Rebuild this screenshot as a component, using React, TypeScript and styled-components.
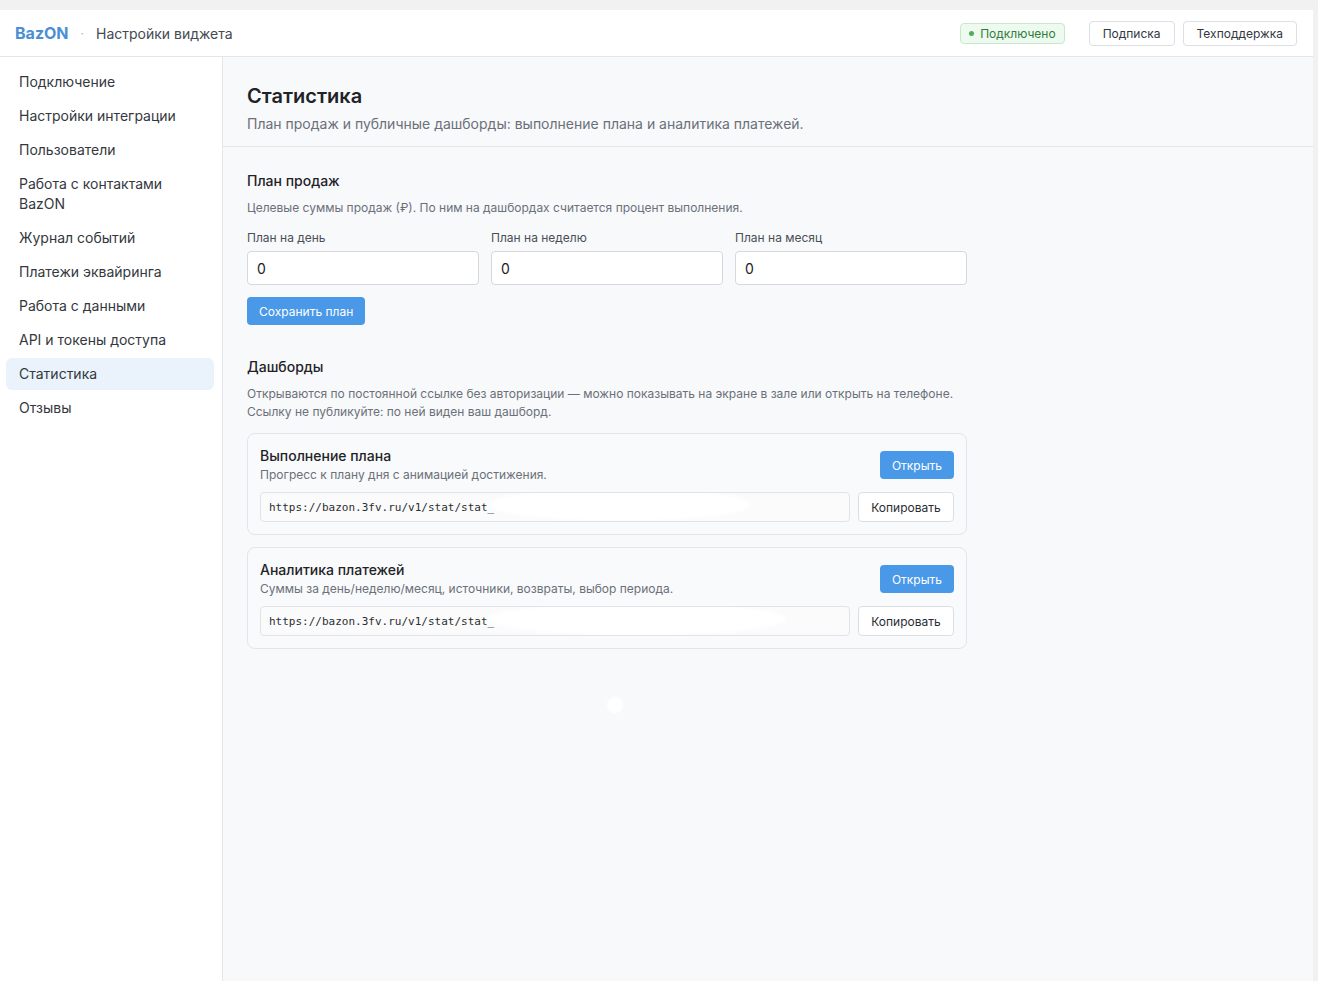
import styled, { createGlobalStyle } from "styled-components";

const GlobalStyle = createGlobalStyle`
  html, body {
    margin: 0;
    padding: 0;
    background: #f1f1f1;
    font-family: Inter, "Noto Sans", sans-serif;
    color: #2b2f36;
  }
  * { box-sizing: border-box; }
`

const Frame = styled.div`
  margin: 10px 5px 0 0;
  height: 971px;
  display: flex;
  flex-direction: column;
  background: #f8f9fb;
  overflow: hidden;
`

const TopBar = styled.header`
  height: 47px;
  flex-shrink: 0;
  background: #fff;
  border-bottom: 1px solid #e4e6ea;
  display: flex;
  align-items: center;
  padding: 0 16px 0 15px;
`

const Brand = styled.span`
  font-size: 16px;
  font-weight: 700;
  color: #4a8fd6;
`

const Dot = styled.span`
  color: #b5b9c0;
  margin: 0 12px;
  font-size: 12px;
`

const PageName = styled.span`
  font-size: 14px;
  color: #444a52;
`

const Spacer = styled.div`
  flex: 1;
`

const Badge = styled.span`
  display: inline-flex;
  align-items: center;
  gap: 6px;
  height: 21px;
  padding: 0 8px;
  font-size: 12px;
  color: #2f7d3a;
  background: #eefaf0;
  border: 1px solid #c6e8cc;
  border-radius: 4px;
  margin-right: 16px;

  &::before {
    content: "";
    width: 5px;
    height: 5px;
    border-radius: 50%;
    background: #4caf5a;
  }
`

const TopButton = styled.button`
  height: 25px;
  padding: 0 13px;
  margin-left: 8px;
  font-family: inherit;
  font-size: 12px;
  color: #33383f;
  background: #fff;
  border: 1px solid #dcdfe3;
  border-radius: 4px;
`

const Body = styled.div`
  flex: 1;
  display: flex;
  min-height: 0;
`

const Sidebar = styled.nav`
  width: 223px;
  flex-shrink: 0;
  background: #fff;
  border-right: 1px solid #e4e6ea;
  padding: 9px 8px 0 6px;
  display: flex;
  flex-direction: column;
  gap: 2px;
`

const NavItem = styled.div<{ $active?: boolean }>`
  padding: 6px 13px;
  font-size: 14px;
  line-height: 20px;
  color: #34383e;
  border-radius: 6px;
  background: ${p => (p.$active ? "#eaf2fc" : "transparent")};
`

const Main = styled.main`
  flex: 1;
  display: flex;
  flex-direction: column;
`

const PageHead = styled.div`
  padding: 25px 24px 12px;
  border-bottom: 1px solid #e4e6ea;
`

const Title = styled.h1`
  margin: 0;
  font-size: 20px;
  line-height: 28px;
  font-weight: 600;
  color: #1f2328;
`

const Subtitle = styled.p`
  margin: 4px 0 0;
  font-size: 14px;
  line-height: 20px;
  color: #6b7079;
`

const Content = styled.div`
  width: 768px;
  padding: 24px 24px;
`

const SectionTitle = styled.h2<{ $gap?: number }>`
  margin: ${p => p.$gap ?? 0}px 0 0;
  font-size: 14px;
  line-height: 20px;
  font-weight: 500;
  color: #1f2328;
`

const Hint = styled.p`
  margin: 8px 0 0;
  font-size: 12px;
  line-height: 18px;
  color: #6b7079;
`

const FieldGrid = styled.div`
  width: 100%;
  display: grid;
  grid-template-columns: repeat(3, minmax(0, 1fr));
  gap: 12px;
  margin-top: 12px;
`

const Field = styled.label`
  display: flex;
  flex-direction: column;
  gap: 4px;
  font-size: 12px;
  line-height: 18px;
  color: #4a4f57;
`

const Input = styled.input`
  width: 100%;
  height: 34px;
  padding: 0 9px;
  font-family: inherit;
  font-size: 14px;
  color: #222;
  background: #fff;
  border: 1px solid #d5d8dd;
  border-radius: 4px;
`

const PrimaryButton = styled.button<{ $top?: number }>`
  height: 28px;
  padding: 0 12px;
  margin-top: ${p => p.$top ?? 0}px;
  font-family: inherit;
  font-size: 12px;
  color: #fff;
  background: #4a98e8;
  border: none;
  border-radius: 4px;
`

const Form = styled.div`
  display: flex;
  flex-direction: column;
  align-items: flex-start;
`

const Cards = styled.div`
  display: flex;
  flex-direction: column;
  gap: 12px;
  margin-top: 12px;
`

const Card = styled.div`
  background: #f9fafb;
  border: 1px solid #e3e5e9;
  border-radius: 8px;
  padding: 12px;
`

const CardHead = styled.div`
  display: flex;
  align-items: center;
  justify-content: space-between;
`

const CardTitle = styled.div`
  font-size: 14px;
  line-height: 20px;
  font-weight: 500;
  color: #1f2328;
`

const CardText = styled.div`
  font-size: 12px;
  line-height: 18px;
  color: #6b7079;
`

const LinkRow = styled.div`
  display: flex;
  gap: 8px;
  margin-top: 8px;
`

const UrlBox = styled.div`
  position: relative;
  flex: 1;
  height: 30px;
  display: flex;
  align-items: center;
  padding: 0 8px;
  font-family: "DejaVu Sans Mono", "Liberation Mono", monospace;
  font-size: 11px;
  color: #2a2e33;
  background: #fbfbfc;
  border: 1px solid #e1e3e7;
  border-radius: 4px;
  overflow: hidden;
  white-space: pre;
`

const Redaction = styled.span<{ $left: number; $width: number }>`
  position: absolute;
  top: -4px;
  left: ${p => p.$left}px;
  width: ${p => p.$width}px;
  height: 32px;
  background: #fff;
  border-radius: 50%;
  filter: blur(2px);
`

const GhostButton = styled.button`
  width: 96px;
  height: 30px;
  font-family: inherit;
  font-size: 12px;
  color: #2a2e33;
  background: #fff;
  border: 1px solid #dcdfe3;
  border-radius: 4px;
`

const Stray = styled.span`
  position: absolute;
  left: 607px;
  top: 697px;
  width: 16px;
  height: 16px;
  border-radius: 50%;
  background: #fff;
  filter: blur(1px);
`

const nav = [
  "Подключение",
  "Настройки интеграции",
  "Пользователи",
  "Работа с контактами BazON",
  "Журнал событий",
  "Платежи эквайринга",
  "Работа с данными",
  "API и токены доступа",
  "Статистика",
  "Отзывы",
];

const dashboards = [
  {
    title: "Выполнение плана",
    text: "Прогресс к плану дня с анимацией достижения.",
    url: "https://bazon.3fv.ru/v1/stat/stat_",
    blob: [228, 262],
  },
  {
    title: "Аналитика платежей",
    text: "Суммы за день/неделю/месяц, источники, возвраты, выбор периода.",
    url: "https://bazon.3fv.ru/v1/stat/stat_",
    blob: [226, 300],
  },
];

export default function App() {
  return (
    <>
      <GlobalStyle />
      <Frame>
        <TopBar>
          <Brand>BazON</Brand>
          <Dot>·</Dot>
          <PageName>Настройки виджета</PageName>
          <Spacer />
          <Badge>Подключено</Badge>
          <TopButton>Подписка</TopButton>
          <TopButton>Техподдержка</TopButton>
        </TopBar>
        <Body>
          <Sidebar>
            {nav.map(item => (
              <NavItem key={item} $active={item === "Статистика"}>
                {item === "Работа с контактами BazON" ? (
                  <>Работа с контактами<br />BazON</>
                ) : item}
              </NavItem>
            ))}
          </Sidebar>
          <Main>
            <PageHead>
              <Title>Статистика</Title>
              <Subtitle>План продаж и публичные дашборды: выполнение плана и аналитика платежей.</Subtitle>
            </PageHead>
            <Content>
              <Form>
                <SectionTitle>План продаж</SectionTitle>
                <Hint>Целевые суммы продаж (₽). По ним на дашбордах считается процент выполнения.</Hint>
                <FieldGrid>
                  <Field>План на день<Input defaultValue="0" /></Field>
                  <Field>План на неделю<Input defaultValue="0" /></Field>
                  <Field>План на месяц<Input defaultValue="0" /></Field>
                </FieldGrid>
                <PrimaryButton $top={12}>Сохранить план</PrimaryButton>
              </Form>

              <SectionTitle $gap={32}>Дашборды</SectionTitle>
              <Hint>
                Открываются по постоянной ссылке без авторизации — можно показывать на экране в зале или открыть на телефоне.
                <br />
                Ссылку не публикуйте: по ней виден ваш дашборд.
              </Hint>
              <Cards>
                {dashboards.map(d => (
                  <Card key={d.title}>
                    <CardHead>
                      <div>
                        <CardTitle>{d.title}</CardTitle>
                        <CardText>{d.text}</CardText>
                      </div>
                      <PrimaryButton>Открыть</PrimaryButton>
                    </CardHead>
                    <LinkRow>
                      <UrlBox>
                        {d.url}
                        <Redaction $left={d.blob[0]} $width={d.blob[1]} />
                      </UrlBox>
                      <GhostButton>Копировать</GhostButton>
                    </LinkRow>
                  </Card>
                ))}
              </Cards>
            </Content>
          </Main>
        </Body>
      </Frame>
      <Stray />
    </>
  );
}
